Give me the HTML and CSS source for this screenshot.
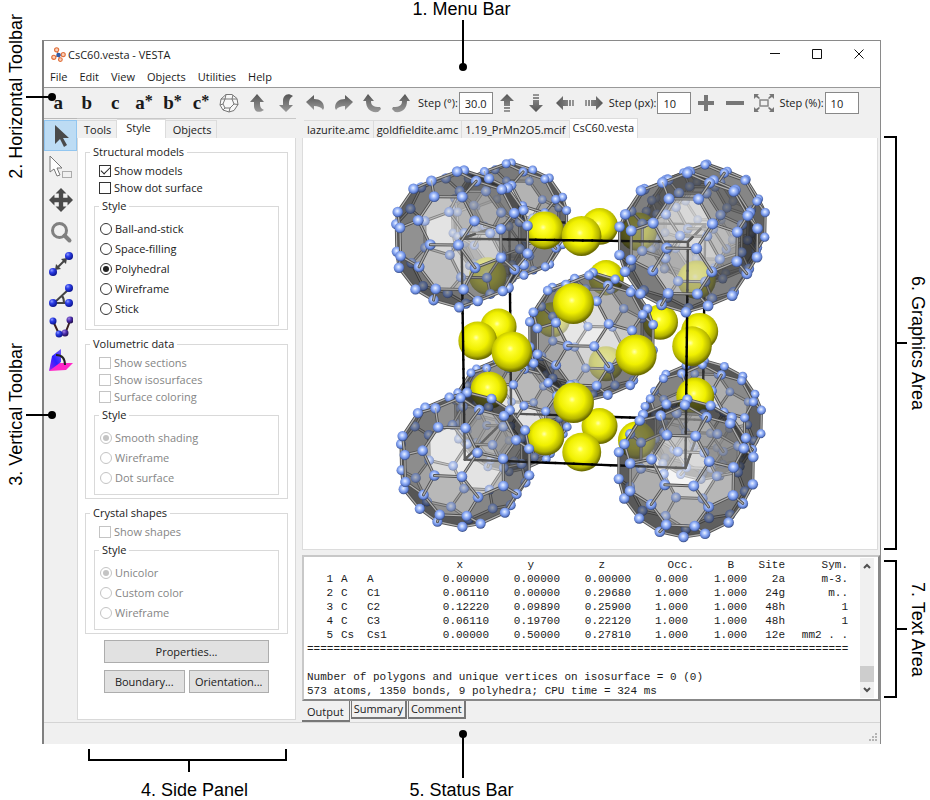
FILE: index.html
```html
<!DOCTYPE html>
<html lang="en">
  <head>
    <meta charset="utf-8" />
    <meta name="viewport" content="width=device-width, initial-scale=1.0" />
    <title>CsC60.vesta - VESTA</title>
    <link rel="stylesheet" href="styles.css">
  </head>
  <body>
    <svg class="defs" aria-hidden="true">
      <defs>
        <linearGradient id="steel" x1="0" y1="0" x2="0" y2="1">
          <stop offset="0" stop-color="#555" />
          <stop offset="1" stop-color="#999" />
        </linearGradient>
        <radialGradient id="ball" cx="0.35" cy="0.3" r="0.7">
          <stop offset="0" stop-color="#8f9cff" />
          <stop offset="0.4" stop-color="#2c3ee8" />
          <stop offset="1" stop-color="#0c1590" />
        </radialGradient>
        <radialGradient id="ball-purple" cx="0.35" cy="0.3" r="0.7">
          <stop offset="0" stop-color="#9f80e8" />
          <stop offset="0.5" stop-color="#4a2ca8" />
          <stop offset="1" stop-color="#241050" />
        </radialGradient>
        <linearGradient id="plane" x1="0" y1="1" x2="1" y2="0">
          <stop offset="0" stop-color="#a020f0" />
          <stop offset="0.5" stop-color="#2a20ff" />
          <stop offset="1" stop-color="#7a60ff" />
        </linearGradient>
        <symbol id="turn" viewBox="0 0 20 20">
          <path d="M1 9 9 2v4c6 0 10 3 10 9l-1 2c-2-3-5-4-9-4v4z" fill="url(#steel)" />
        </symbol>
        <symbol id="roll" viewBox="0 0 20 20">
          <path d="M6 1l6 7H9c0 4 2 6 9 6l1 2-3 3C8 20 4 15 4 8H1z" fill="url(#steel)" />
        </symbol>
        <symbol id="flip" viewBox="0 0 20 20">
          <path d="M9 1l7 8h-4c0 4 0 6 4 8-6 4-10 1-10-4V9H2z" fill="url(#steel)" />
        </symbol>
        <symbol id="flip-down" viewBox="0 0 20 20">
          <path d="M9 19l7-7h-4c0-4 0-6 4-9-6-4-10 0-10 5v4H2z" fill="url(#steel)" />
        </symbol>
        <symbol id="shift" viewBox="0 0 20 20">
          <path d="M10 1l7 7h-4v5H7V8H3zM7 14h6v2H7zM7 17h6v2H7z" fill="url(#steel)" />
        </symbol>
      </defs>
    </svg>

    <div class="figure">
      <div class="note note-top"><span>1. Menu Bar</span></div>

      <div class="notes-left">
        <div class="note"><span>2. Horizontal Toolbar</span></div>
        <div class="note"><span>3. Vertical Toolbar</span></div>
      </div>

      <div class="window">
        <header class="titlebar">
          <svg class="app-icon" viewBox="0 0 16 16">
            <g stroke="#e0703c" stroke-width="1.2" fill="#fbd0b8">
              <path d="M8 9 6 3M8 9l5-1M8 9l-5 2M8 9l2 5" />
              <circle cx="6" cy="3" r="2.2" />
              <circle cx="13" cy="8" r="2.2" />
              <circle cx="3" cy="11" r="2.2" />
              <circle cx="10" cy="13.4" r="2" />
            </g>
            <circle cx="8" cy="8.6" r="2.4" fill="#2f5da8" />
          </svg>
          <span class="title">CsC60.vesta - VESTA</span>
          <button class="win-btn" aria-label="Minimize"><svg viewBox="0 0 11 11"><path d="M0 5.5h10" /></svg></button>
          <button class="win-btn" aria-label="Maximize"><svg viewBox="0 0 11 11"><path d="M.5 1.5h9v9h-9z" /></svg></button>
          <button class="win-btn" aria-label="Close"><svg viewBox="0 0 11 11"><path d="M.5 1.5l9 9M9.500 1.500l-9 9" /></svg></button>
        </header>

        <nav class="menubar">
          <button>File</button>
          <button>Edit</button>
          <button>View</button>
          <button>Objects</button>
          <button>Utilities</button>
          <button>Help</button>
        </nav>

        <div class="toolbar">
          <div class="view-tools">
            <button class="axis">a</button>
            <button class="axis">b</button>
            <button class="axis">c</button>
            <button class="axis">a<sup>*</sup></button>
            <button class="axis">b<sup>*</sup></button>
            <button class="axis">c<sup>*</sup></button>
            <button aria-label="Standard orientation">
              <svg viewBox="0 0 20 20" fill="#f8f8f8" stroke="#777" stroke-width="1">
                <path d="M7 1.500h6l5 4 1 6-4 6-5 1.500-6-2-3-5 1-6z" />
                <path d="M6 6h7l2 5-4 4H6l-2-4zM7 1.500 6 6M13 6l1-4M13 6l5 0M15 11l4 .5M11 15l-1 4M6 15l-2 2M4 11l-3 1M6 6 2 6" fill="none" />
              </svg>
            </button>
            <button aria-label="Rotate up"><svg><use href="#flip" /></svg></button>
            <button aria-label="Rotate down"><svg><use href="#flip-down" /></svg></button>
            <button aria-label="Rotate left"><svg><use href="#turn" /></svg></button>
            <button aria-label="Rotate right"><svg class="mirror"><use href="#turn" /></svg></button>
            <button aria-label="Roll left"><svg><use href="#roll" /></svg></button>
            <button aria-label="Roll right"><svg class="mirror"><use href="#roll" /></svg></button>
          </div>
          <label for="step-deg">Step (°):</label>
          <input type="text" id="step-deg" value="30.0" />
          <div class="shift-tools">
            <button aria-label="Move up"><svg><use href="#shift" /></svg></button>
            <button aria-label="Move down"><svg class="half"><use href="#shift" /></svg></button>
            <button aria-label="Move left"><svg class="left"><use href="#shift" /></svg></button>
            <button aria-label="Move right"><svg class="right"><use href="#shift" /></svg></button>
          </div>
          <label for="step-px">Step (px):</label>
          <input type="text" id="step-px" value="10" />
          <div class="zoom-tools">
            <button aria-label="Zoom in"><svg viewBox="0 0 20 20"><path d="M8 2h4v6h6v4h-6v6H8v-6H2V8h6z" fill="#777" /></svg></button>
            <button aria-label="Zoom out"><svg viewBox="0 0 20 20"><path d="M1 8h18v4H1z" fill="#777" /></svg></button>
            <button aria-label="Fit to screen">
              <svg viewBox="0 0 20 20">
                <path d="M6 7h8v6H6z" fill="none" stroke="#888" stroke-width="1.500" />
                <path d="M0 1h5L3.500 2.500 6 5 5 6 2 4 0 6zM20 1h-5l1.500 1.500L14 5l1 1 3-2 2 2zM0 19h5l-1.500-1.500L6 15l-1-1-3 2-2-2zM20 19h-5l1.500-1.500L14 15l1-1 3 2 2-2z" fill="#777" />
              </svg>
            </button>
          </div>
          <label for="step-pct">Step (%):</label>
          <input type="text" id="step-pct" value="10" />
        </div>

        <div class="workspace">
          <div class="tool-strip">
            <button class="selected" aria-label="Rotate"><svg viewBox="0 0 24 24"><path d="M6 1v19l5-5 4 8 3-2-4-7h6z" fill="#4a4a4a" /></svg></button>
            <button aria-label="Select">
              <svg viewBox="0 0 24 24">
                <path d="M1 0v16l4-3 3 7 3-1-3-7h5z" fill="#fff" stroke="#777" />
                <path d="M13.500 15.500h9v6h-9z" fill="none" stroke="#666" stroke-dasharray="1 1" />
              </svg>
            </button>
            <button aria-label="Translate"><svg viewBox="1 1 22 22"><path d="M12 1l5 5h-3v4h4V7l5 5-5 5v-3h-4v4h3l-5 5-5-5h3v-4H6v3l-5-5 5-5v3h4V6H7z" fill="#4a4a4a" /></svg></button>
            <button aria-label="Magnify">
              <svg viewBox="0 0 24 24" fill="none" stroke="#808080">
                <circle cx="10.500" cy="10.500" r="7" stroke-width="3" />
                <path d="M15.500 15.500l5 5" stroke-width="4" stroke-linecap="round" />
              </svg>
            </button>
            <button aria-label="Distance">
              <svg viewBox="0 0 24 24">
                <path d="M8 16l8-8" stroke="#444" stroke-width="2" />
                <path d="M18 6l-1 6-5-5zM6 18l1-6 5 5z" fill="#444" />
                <circle cx="20" cy="4" r="4" fill="url(#ball)" />
                <circle cx="4" cy="20" r="4" fill="url(#ball)" />
              </svg>
            </button>
            <button aria-label="Bond angle">
              <svg viewBox="0 0 24 24">
                <path d="M20 5 5 19h15M13 12c2 2 2 4 2 7" stroke="#444" stroke-width="2" fill="none" />
                <circle cx="20" cy="4" r="4" fill="url(#ball)" />
                <circle cx="4" cy="19" r="4" fill="url(#ball)" />
                <circle cx="20" cy="19" r="4" fill="url(#ball)" />
              </svg>
            </button>
            <button aria-label="Dihedral angle">
              <svg viewBox="0 0 24 24">
                <path d="M4 5l6 13h6l5-13" stroke="#3a2020" stroke-width="2" fill="none" />
                <circle cx="4" cy="5" r="3.500" fill="url(#ball)" />
                <circle cx="21" cy="4" r="3.500" fill="url(#ball-purple)" />
                <circle cx="16" cy="17" r="3.500" fill="url(#ball-purple)" />
                <circle cx="10" cy="18" r="3.500" fill="url(#ball)" />
              </svg>
            </button>
            <button aria-label="Interfacial angle">
              <svg viewBox="0 0 24 24">
                <path d="M0 23l8-8 16 0-7 7z" fill="#ff28c8" />
                <path d="M0 23 3 8l9-7 0 13z" fill="url(#plane)" />
                <path d="M7 7c6 0 9 4 9 10" stroke="#222" stroke-width="2" fill="none" />
              </svg>
            </button>
          </div>

          <aside class="side">
            <div class="tabs">
              <button>Tools</button>
              <button class="active">Style</button>
              <button>Objects</button>
            </div>
            <div class="side-page">
              <fieldset>
                <legend>Structural models</legend>
                <label class="check"><input type="checkbox" checked />Show models</label>
                <label class="check"><input type="checkbox" />Show dot surface</label>
                <fieldset>
                  <legend>Style</legend>
                  <label class="radio"><input type="radio" name="model" />Ball-and-stick</label>
                  <label class="radio"><input type="radio" name="model" />Space-filling</label>
                  <label class="radio"><input type="radio" name="model" checked />Polyhedral</label>
                  <label class="radio"><input type="radio" name="model" />Wireframe</label>
                  <label class="radio"><input type="radio" name="model" />Stick</label>
                </fieldset>
              </fieldset>
              <fieldset>
                <legend>Volumetric data</legend>
                <label class="check off"><input type="checkbox" disabled />Show sections</label>
                <label class="check off"><input type="checkbox" disabled />Show isosurfaces</label>
                <label class="check off"><input type="checkbox" disabled />Surface coloring</label>
                <fieldset>
                  <legend>Style</legend>
                  <label class="radio off"><input type="radio" name="volume" checked disabled />Smooth shading</label>
                  <label class="radio off"><input type="radio" name="volume" disabled />Wireframe</label>
                  <label class="radio off"><input type="radio" name="volume" disabled />Dot surface</label>
                </fieldset>
              </fieldset>
              <fieldset>
                <legend>Crystal shapes</legend>
                <label class="check off"><input type="checkbox" disabled />Show shapes</label>
                <fieldset>
                  <legend>Style</legend>
                  <label class="radio off"><input type="radio" name="shape" checked disabled />Unicolor</label>
                  <label class="radio off"><input type="radio" name="shape" disabled />Custom color</label>
                  <label class="radio off"><input type="radio" name="shape" disabled />Wireframe</label>
                </fieldset>
              </fieldset>
              <div class="actions">
                <button class="wide">Properties...</button>
                <button>Boundary...</button>
                <button>Orientation...</button>
              </div>
            </div>
          </aside>

          <main class="content">
            <div class="tabs">
              <button>lazurite.amc</button>
              <button>goldfieldite.amc</button>
              <button>1.19_PrMn2O5.mcif</button>
              <button class="active">CsC60.vesta</button>
            </div>
            <div class="graphics">
              <svg id="crystal" viewBox="0 0 574 408">
                <defs>
                  <radialGradient id="cs" cx="0.46" cy="0.42" r="0.56">
                    <stop offset="0" stop-color="#ffffb0" />
                    <stop offset="0.150" stop-color="#ffff30" />
                    <stop offset="0.550" stop-color="#f0f000" />
                    <stop offset="0.850" stop-color="#b4b400" />
                    <stop offset="1" stop-color="#6c6c00" />
                  </radialGradient>
                  <radialGradient id="carbon" cx="0.46" cy="0.42" r="0.58">
                    <stop offset="0" stop-color="#eef4ff" />
                    <stop offset="0.400" stop-color="#9cb8fa" />
                    <stop offset="0.750" stop-color="#6484d8" />
                    <stop offset="1" stop-color="#34487c" />
                  </radialGradient>
                </defs>
              </svg>
            </div>
            <div class="output">
              <div class="log">
                <table>
                  <colgroup>
                    <col class="c-no"><col class="c-el"><col class="c-name"><col class="c-x"><col class="c-y"><col class="c-z"><col class="c-occ"><col class="c-b"><col class="c-site"><col>
                  </colgroup>
                  <tr><th></th><th></th><th></th><th class="axis-name">x</th><th class="axis-name">y</th><th class="axis-name">z</th><th>Occ.</th><th class="b-name">B</th><th>Site</th><th>Sym.</th></tr>
                  <tr><td>1</td><td class="el">A</td><td class="name">A</td><td>0.00000</td><td>0.00000</td><td>0.00000</td><td class="occ">0.000</td><td>1.000</td><td>2a</td><td>m-3.</td></tr>
                  <tr><td>2</td><td class="el">C</td><td class="name">C1</td><td>0.06110</td><td>0.00000</td><td>0.29680</td><td class="occ">1.000</td><td>1.000</td><td>24g</td><td>m..</td></tr>
                  <tr><td>3</td><td class="el">C</td><td class="name">C2</td><td>0.12220</td><td>0.09890</td><td>0.25900</td><td class="occ">1.000</td><td>1.000</td><td>48h</td><td>1</td></tr>
                  <tr><td>4</td><td class="el">C</td><td class="name">C3</td><td>0.06110</td><td>0.19700</td><td>0.22120</td><td class="occ">1.000</td><td>1.000</td><td>48h</td><td>1</td></tr>
                  <tr><td>5</td><td class="el">Cs</td><td class="name">Cs1</td><td>0.00000</td><td>0.50000</td><td>0.27810</td><td class="occ">1.000</td><td>1.000</td><td>12e</td><td>mm2 . .</td></tr>
                </table>
                <p class="rule">==================================================================================</p>
                <p>&nbsp;</p>
                <p>Number of polygons and unique vertices on isosurface = 0 (0)</p>
                <p>573 atoms, 1350 bonds, 9 polyhedra; CPU time = 324 ms</p>
              </div>
              <div class="scrollbar">
                <svg viewBox="0 0 14 14"><path d="M4 9l3-3 3 3" /></svg>
                <div class="thumb"></div>
                <svg viewBox="0 0 14 14"><path d="M4 5l3 3 3-3" /></svg>
              </div>
            </div>
            <div class="bottom-tabs">
              <button class="active">Output</button>
              <button>Summary</button>
              <button>Comment</button>
            </div>
          </main>
        </div>

        <footer class="statusbar">
          <svg viewBox="0 0 9 9" fill="#b4b4b4"><path d="M6 0h2v2H6zM3 3h2v2H3zM6 3h2v2H6zM0 6h2v2H0zM3 6h2v2H3zM6 6h2v2H6z" /></svg>
        </footer>
      </div>

      <div class="notes-right">
        <div class="span-note tall"><i></i><span>6. Graphics Area</span></div>
        <div class="span-note"><i></i><span>7. Text Area</span></div>
      </div>

      <div class="notes-bottom">
        <div class="panel-note"><i></i><span>4. Side Panel</span></div>
        <div class="note status-note"><span>5. Status Bar</span></div>
      </div>
    </div>
    <script src="crystal.js"></script>
  </body>
</html>
```
FILE: styles.css
```css
* {
  box-sizing: border-box;
}
body {
  margin: 0;
  background: #fff;
  font-family: "Open Sans", "Liberation Sans", sans-serif;
  font-size: 11px;
  line-height: 16px;
  color: #1a1a1a;
}
button,
input {
  font: inherit;
  color: inherit;
  margin: 0;
}
button {
  border: 0;
  padding: 0;
  background: none;
  white-space: nowrap;
}
p {
  margin: 0;
}
.defs {
  display: block;
  width: 0;
  height: 0;
}
.figure {
  display: grid;
  grid-template-columns: 42px minmax(0, 1fr) 49px;
  grid-template-rows: 40px auto 57px;
  min-height: 100vh;
}

/* callouts */
.note,
.span-note,
.panel-note {
  position: relative;
  font-family: "Liberation Sans", sans-serif;
  font-size: 18px;
  line-height: 18px;
  color: #000;
  white-space: nowrap;
}
.note::before {
  content: "";
  position: absolute;
  z-index: 2;
  background: #000;
}
.note::after {
  content: "";
  position: absolute;
  z-index: 2;
  width: 8px;
  height: 8px;
  border-radius: 50%;
  background: #000;
}
.note-top {
  grid-column: 2;
  justify-self: center;
}
.note-top::before {
  left: 50%;
  top: 20px;
  width: 2px;
  height: 46px;
}
.note-top::after {
  left: calc(50% - 3px);
  top: 63px;
}
.notes-left {
  grid-column: 1;
  grid-row: 1 / 4;
  display: flex;
  flex-direction: column;
  gap: 164px;
  padding: 14px 0 0 7px;
}
.notes-left span {
  display: block;
  writing-mode: vertical-rl;
  transform: rotate(180deg);
}
.notes-left .note::before {
  left: 19px;
  top: 50%;
  width: 26px;
  height: 2px;
}
.notes-left .note::after {
  left: 41px;
  top: calc(50% - 3px);
}
.notes-right {
  grid-column: 3;
  grid-row: 1 / 4;
  display: flex;
  flex-direction: column;
  gap: 10px;
  padding: 136px 0 103px 3px;
}
.notes-right .span-note {
  flex: 1 1 0;
  display: flex;
  align-items: center;
}
.notes-right .tall {
  flex-grow: 3;
}
.notes-right i {
  align-self: stretch;
  width: 13px;
  border: 2px solid #000;
  border-left: 0;
}
.notes-right .span-note::after {
  content: "";
  order: 1;
  width: 10px;
  height: 2px;
  background: #000;
}
.notes-right span {
  order: 2;
  margin-left: 2px;
  writing-mode: vertical-rl;
}
.notes-bottom {
  grid-column: 2;
  display: grid;
  grid-template-columns: 1fr auto 1fr;
}
.panel-note {
  width: 199px;
  margin: 5px 0 0 46px;
  text-align: center;
}
.panel-note i {
  display: block;
  height: 12px;
  border: 2px solid #000;
  border-top: 0;
}
.panel-note::after {
  content: "";
  position: absolute;
  left: 50%;
  top: 12px;
  width: 2px;
  height: 11px;
  background: #000;
}
.panel-note span {
  display: block;
  padding: 20px 0 0 14px;
}
.status-note {
  padding-top: 37px;
}
.status-note::before {
  left: 50%;
  top: -8px;
  width: 2px;
  height: 42px;
}
.status-note::after {
  left: calc(50% - 3px);
  top: -14px;
}

/* window */
.window {
  grid-column: 2;
  display: flex;
  flex-direction: column;
  border: 1px solid #8a8a8a;
  border-left: 2px solid #808080;
  border-bottom: 0;
  background: #f0f0f0;
}
.titlebar {
  display: flex;
  align-items: center;
  height: 27px;
  padding-left: 7px;
  background: #fff;
}
.app-icon {
  width: 15px;
  height: 15px;
  margin-right: 2px;
}
.title {
  flex: 1;
}
.win-btn {
  width: 42px;
  height: 26px;
}
.win-btn svg {
  width: 11px;
  height: 11px;
  fill: none;
  stroke: #111;
}
.menubar {
  display: flex;
  gap: 12px;
  height: 20px;
  padding: 0 6px 1px;
  background: #fff;
  border-bottom: 1px solid #999;
}
.toolbar {
  display: flex;
  align-items: center;
  height: 30px;
}
.toolbar svg {
  display: block;
  width: 20px;
  height: 20px;
  margin: auto;
}
.toolbar input {
  width: 34px;
  height: 22px;
  margin-left: 1px;
  padding: 0 5px;
  border: 1px solid #888;
  background: #fff;
}
.toolbar label {
  white-space: nowrap;
}
.view-tools {
  display: grid;
  grid-template-columns: repeat(13, 1fr);
  width: 371px;
  margin-right: 3px;
}
.shift-tools,
.zoom-tools {
  display: grid;
  grid-auto-flow: column;
  grid-auto-columns: 29px;
}
.zoom-tools {
  margin-right: 1px;
}
.axis {
  font-family: "Liberation Serif", serif;
  font-weight: bold;
  font-size: 19px;
  line-height: 24px;
}
.axis sup {
  font-size: 16px;
  line-height: 8px;
  vertical-align: 3px;
}
.mirror {
  transform: scaleX(-1);
}
.half {
  transform: rotate(180deg);
}
.left {
  transform: rotate(-90deg);
}
.right {
  transform: rotate(90deg);
}
.workspace {
  flex: 1;
  display: flex;
  border-bottom: 1px solid #d4d4d4;
}
.tool-strip {
  display: flex;
  flex-direction: column;
  gap: 1px;
  width: 33px;
  padding-top: 1px;
  border-top: 1px solid #b8b8b8;
}
.tool-strip button {
  height: 31px;
  border: 1px solid transparent;
}
.tool-strip .selected {
  background: #bddcf4;
  border-color: #92c6f0;
}
.tool-strip svg {
  display: block;
  width: 24px;
  height: 24px;
  margin: auto;
}

/* side panel */
.tabs {
  display: flex;
  align-items: flex-end;
  height: 20px;
}
.tabs button {
  height: 18px;
  padding: 0 3px;
  border: 1px solid #dcdcdc;
  border-width: 1px 1px 0 0;
}
.tabs .active {
  height: 20px;
  padding-bottom: 2px;
  background: #fff;
}
.side {
  display: flex;
  flex-direction: column;
  width: 219px;
  border-top: 1px solid #c8c8c8;
}
.side .tabs {
  height: 19px;
}
.side .tabs button {
  padding: 0 5px 0 7px;
}
.side .tabs .active {
  height: 19px;
  padding: 0 14px 2px 9px;
}
.side-page {
  flex: 1;
  padding: 6px 7px 26px;
  margin-bottom: 2px;
  background: #fff;
  border: 1px solid #d9d9d9;
  border-top: 0;
}
fieldset {
  min-width: 0;
  margin: 0 0 6px;
  padding: 2px 8px 3px;
  border: 1px solid #d9d9d9;
}
fieldset fieldset {
  margin: 2px 0 0;
  padding: 5px 5px 6px;
}
legend {
  padding: 0 3px;
  margin-left: -4px;
}
fieldset fieldset legend {
  margin-left: -1px;
}
.check,
.radio {
  display: flex;
  align-items: center;
  gap: 3px;
  height: 17px;
}
.check {
  margin-left: 5px;
}
.radio {
  height: 20px;
}
.off {
  color: #858585;
}
.check input,
.radio input {
  appearance: none;
  display: grid;
  place-items: center;
  width: 12px;
  height: 12px;
  border: 1px solid #333;
  background: #fff;
}
.radio input {
  border-radius: 50%;
}
.check.off input,
.radio.off input {
  border-color: #c4c4c4;
}
.check input:checked::before {
  content: "";
  width: 8px;
  height: 4px;
  margin-bottom: 3px;
  border: solid #222;
  border-width: 0 0 1px 1px;
  transform: rotate(-45deg);
}
.radio input:checked::before {
  content: "";
  width: 6px;
  height: 6px;
  border-radius: 50%;
  background: #222;
}
.radio.off input:checked::before {
  background: #c4c4c4;
}
.actions {
  display: grid;
  grid-template-columns: 1fr 1fr;
  gap: 7px 4px;
  padding: 0 19px;
}
.actions button {
  height: 23px;
  background: #e1e1e1;
  border: 1px solid #adadad;
}
.actions .wide {
  grid-column: 1 / 3;
}

/* graphics and text areas */
.content {
  flex: 1;
  min-width: 0;
  display: flex;
  flex-direction: column;
  margin-left: 6px;
}
.content .tabs {
  padding-left: 2px;
}
.graphics {
  flex: 1;
  margin-right: 2px;
  background: #fff;
  border: 1px solid #dcdcdc;
  border-top: 0;
}
#crystal {
  display: block;
  width: 100%;
  height: 408px;
}
.output {
  display: flex;
  margin: 5px 0 0;
  padding: 1px 4px 1px 3px;
  background: #fff;
  border: 2px solid #c8c8c8;
  border-right-color: #888;
  border-bottom-color: #888;
}
.log {
  flex: 1;
  min-width: 0;
  overflow: hidden;
  font-family: "Liberation Mono", monospace;
  font-size: 11px;
  line-height: 14px;
  white-space: nowrap;
}
.log table {
  width: 541px;
  table-layout: fixed;
  border-collapse: collapse;
}
.log th,
.log td {
  padding: 0;
  font-weight: normal;
  text-align: right;
}
.c-no {
  width: 26px;
}
.c-el {
  width: 28px;
}
.c-name {
  width: 40px;
}
.c-x {
  width: 88px;
}
.c-y,
.c-z {
  width: 71px;
}
.c-occ {
  width: 63px;
}
.c-b {
  width: 53px;
}
.c-site {
  width: 38px;
}
.log .el {
  text-align: left;
  padding-left: 8px;
}
.log .name {
  text-align: left;
  padding-left: 6px;
}
.log .axis-name {
  padding-right: 26px;
}
.log .b-name {
  padding-right: 13px;
}
.log .occ {
  padding-right: 6px;
}
.scrollbar {
  display: flex;
  flex-direction: column;
  width: 14px;
  background: #f0f0f0;
}
.scrollbar svg {
  width: 14px;
  height: 16px;
  fill: none;
  stroke: #505050;
  stroke-width: 2;
}
.thumb {
  height: 16px;
  margin-top: auto;
  background: #cdcdcd;
}
.bottom-tabs {
  display: flex;
  align-items: flex-start;
  gap: 1px;
  height: 21px;
}
.bottom-tabs button {
  height: 18px;
  padding: 0 2px;
  border: 1px solid #777;
  border-width: 0 2px 2px 1px;
}
.bottom-tabs .active {
  height: 21px;
  padding: 3px 5px 0;
  border-left: 0;
  border-right-width: 1px;
}
.statusbar {
  display: flex;
  justify-content: flex-end;
  align-items: flex-end;
  height: 21px;
  padding: 2px;
}
.statusbar svg {
  width: 9px;
  height: 9px;
}
```
FILE: crystal.js
```js
const svg = document.querySelector("#crystal");
const NS = "http://www.w3.org/2000/svg";

// cell axes in camera space: x right, y down, z away from the viewer
const A = [0.988, 0.024, -0.152];
const B = [0, 0.988, 0.156];
const C = [0.154, -0.154, 0.976];
const DISTANCE = 6.68;
const FOCAL = 1403;

const CARBON = [
  [0.0611, 0, 0.2968],
  [0.1222, 0.0989, 0.259],
  [0.0611, 0.197, 0.2212],
];

const sub = (a, b) => a.map((v, i) => v - b[i]);
const add = (a, b) => a.map((v, i) => v + b[i]);
const dot = (a, b) => a[0] * b[0] + a[1] * b[1] + a[2] * b[2];
const cross = (a, b) => [
  a[1] * b[2] - a[2] * b[1],
  a[2] * b[0] - a[0] * b[2],
  a[0] * b[1] - a[1] * b[0],
];
const unit = (a) => a.map((v) => v / Math.hypot(...a));
const mean = (list) => list.reduce(add).map((v) => v / list.length);

const toCamera = (p) => {
  const q = sub(p, [0.5, 0.5, 0.5]);
  return [0, 1, 2].map((i) => q[0] * A[i] + q[1] * B[i] + q[2] * C[i]);
};
const project = (c) => {
  const s = FOCAL / (DISTANCE + c[2]);
  return [288 + c[0] * s, 198 + c[1] * s, s];
};

// m-3 orbit of a point: cyclic permutations with all sign changes
const orbit = ([x, y, z]) => {
  const found = new Map();
  [[x, y, z], [z, x, y], [y, z, x]].forEach((p) => {
    for (let m = 0; m < 8; m++) {
      const q = p.map((v, i) => (m & (1 << i) ? -v : v) + 0);
      found.set(q.map((v) => v.toFixed(4)).join(), q);
    }
  });
  return [...found.values()];
};

const cage = CARBON.flatMap(orbit);
const near = cage.map((a) => cage.map((b, i) => i).filter((i) => cage[i] !== a && Math.hypot(...sub(a, cage[i])) < 0.13));
const bonds = near.flatMap((list, i) => list.filter((j) => j > i).map((j) => [i, j]));

const faces = new Map();
near.forEach((list, i) => {
  list.forEach((j) => list.forEach((k) => {
    if (j >= k) return;
    let n = unit(cross(sub(cage[j], cage[i]), sub(cage[k], cage[i])));
    if (dot(n, cage[i]) < 0) n = n.map((v) => -v);
    const ids = cage.map((p, m) => m).filter((m) => Math.abs(dot(n, sub(cage[m], cage[i]))) < 0.01);
    if (ids.length > 6) return;
    const c = mean(ids.map((m) => cage[m]));
    const u = unit(sub(cage[ids[0]], c));
    const v = cross(n, u);
    const angle = (m) => Math.atan2(dot(sub(cage[m], c), v), dot(sub(cage[m], c), u));
    faces.set(ids.join(), { n, ids: ids.sort((a, b) => angle(a) - angle(b)) });
  }));
});

const items = [];
const push = (depth, name, attrs) => items.push({ depth, name, attrs });
const line = (depth, p, q, color, width) =>
  push(depth, "line", { x1: p[0], y1: p[1], x2: q[0], y2: q[1], stroke: color, "stroke-width": width, "stroke-linecap": "round" });

const addCage = (centre) => {
  const cam = cage.map((p) => toCamera(add(p, centre)));
  const scr = cam.map(project);
  // nearest face that touches each atom, so the atom is drawn over all of them
  const front = cam.map((c) => c[2]);
  const pair = {};
  faces.forEach(({ n, ids }) => {
    const c = mean(ids.map((i) => cam[i]));
    const normal = sub(toCamera(n), toCamera([0, 0, 0]));
    const view = unit([-c[0], -c[1], -DISTANCE - c[2]]);
    const facing = Math.abs(dot(normal, view));
    const g = Math.round(20 + 225 * Math.pow(facing, 2.4));
    push(c[2], "polygon", {
      points: ids.map((i) => scr[i].slice(0, 2).join()).join(" "),
      fill: `rgb(${g},${g},${g})`,
      "fill-opacity": 0.54 - 0.14 * facing,
    });
    ids.forEach((i, at) => {
      front[i] = Math.min(front[i], c[2]);
      const j = ids[(at + 1) % ids.length];
      const key = [Math.min(i, j), Math.max(i, j)].join();
      pair[key] = Math.min(pair[key] ?? 99, c[2]);
    });
  });
  bonds.forEach(([i, j]) => {
    const depth = Math.min(pair[[i, j].join()] ?? 99, (cam[i][2] + cam[j][2]) / 2) - 0.002;
    line(depth, scr[i], scr[j], "#505050", 3);
    line(depth - 0.001, scr[i], scr[j], "#b0b0b0", 1.2);
  });
  cam.forEach((c, i) => push(front[i] - 0.01, "circle", { cx: scr[i][0], cy: scr[i][1], r: 0.023 * scr[i][2], fill: "url(#carbon)" }));
};

const corners = [];
for (let m = 0; m < 8; m++) corners.push([m & 1, (m >> 1) & 1, (m >> 2) & 1]);
[...corners, [0.5, 0.5, 0.5]].forEach(addCage);

// cesium: four atoms on each face of the cell
const t = 0.2781;
const cesium = [];
[0, 1].forEach((f) => {
  [[f, 0.5, t], [f, 0.5, 1 - t], [f, t - 0.0562, 0.5], [f, 1.0562 - t, 0.5]].forEach(([x, y, z]) => {
    cesium.push([x, y, z], [z, x, y], [y, z, x]);
  });
});
cesium.forEach((p) => {
  const c = toCamera(p);
  const s = project(c);
  push(c[2] - 0.05, "circle", { cx: s[0], cy: s[1], r: 0.09 * s[2], fill: "url(#cs)" });
});

// cell edges, cut into short pieces so they sort against the atoms
corners.forEach((a) => [0, 1, 2].forEach((k) => {
  if (a[k]) return;
  for (let i = 0; i < 24; i++) {
    const at = (v) => toCamera(a.map((x, m) => (m === k ? v / 24 : x)));
    const p = at(i);
    const q = at(i + 1);
    line((p[2] + q[2]) / 2, project(p), project(q), "#000", 2.4);
  }
}));

items.sort((a, b) => b.depth - a.depth).forEach(({ name, attrs }) => {
  const el = document.createElementNS(NS, name);
  Object.entries(attrs).forEach(([k, v]) => el.setAttribute(k, v));
  svg.append(el);
});
```
